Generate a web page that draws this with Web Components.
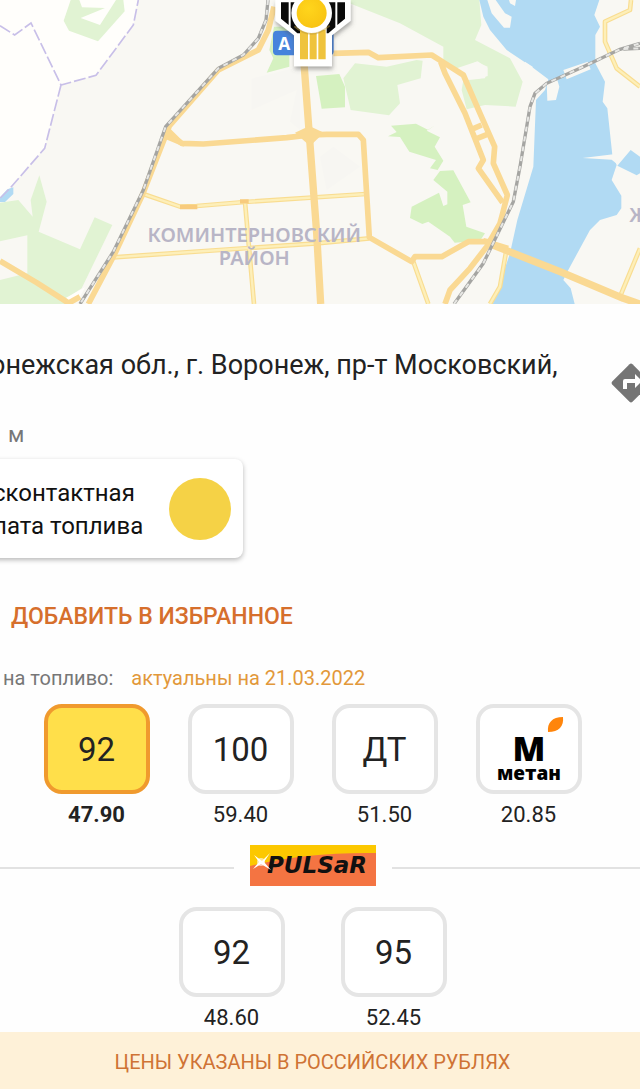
<!DOCTYPE html>
<html lang="ru">
<head>
<meta charset="utf-8">
<meta name="viewport" content="width=device-width, initial-scale=1">
<title>АЗС</title>
<style>
  body {
    margin: 0;
    overflow-x: hidden;
    background: #fefefe;
    color: #222;
    font-family: Roboto, sans-serif;
  }
</style>
</head>
<body>

<station-page>
  <city-map slot="map"></city-map>
  <station-address distance="м">онежская обл., г. Воронеж, пр-т Московский,</station-address>
  <pay-card><span>сконтактная</span><br><span>лата топлива</span></pay-card>
  <favorite-button>ДОБАВИТЬ В ИЗБРАННОЕ</favorite-button>
  <price-caption><span>на топливо:</span><span slot="date">актуальны на 21.03.2022</span></price-caption>
  <fuel-row>
    <fuel-tile price="47.90" selected>92</fuel-tile>
    <fuel-tile price="59.40">100</fuel-tile>
    <fuel-tile price="51.50">ДТ</fuel-tile>
    <fuel-tile price="20.85"><methane-logo></methane-logo></fuel-tile>
  </fuel-row>
  <brand-divider></brand-divider>
  <fuel-row wide>
    <fuel-tile price="48.60">92</fuel-tile>
    <fuel-tile price="52.45">95</fuel-tile>
  </fuel-row>
  <currency-note slot="footer">ЦЕНЫ УКАЗАНЫ В РОССИЙСКИХ РУБЛЯХ</currency-note>
</station-page>

<script>
// small helper, every component below renders a static template
function render(host, html) {
  const template = document.createElement('template');
  template.innerHTML = html;
  host.attachShadow({ mode: 'open' }).appendChild(template.content.cloneNode(true));
}

class StationPage extends HTMLElement {
  constructor() {
    super();
    render(this, `
      <style>
        :host { display: flex; flex-direction: column; min-height: 100vh; overflow: hidden; }
        /* the sheet starts a little to the left of the window */
        main { display: flex; flex-direction: column; flex: 1; margin-left: -15px; padding-top: 40px; }
        footer { margin-left: -15px; }
      </style>
      <slot name="map"></slot>
      <main><slot></slot></main>
      <footer><slot name="footer"></slot></footer>
    `);
  }
}

class CityMap extends HTMLElement {
  constructor() {
    super();
    render(this, `
      <style>
        :host { display: block; }
        svg { display: block; width: 100%; }
        .park { fill: #e1f3d3; }
        .park2 { fill: #d5f1c0; }
        .water { fill: #b1daf3; }
        .land { fill: #f9f8f3; }
        .road { fill: none; stroke: #fad993; stroke-linejoin: round; }
        .w8 { stroke-width: 12; }
        .w6 { stroke-width: 17; }
        .w9 { stroke-width: 22; }
        .street { fill: none; stroke: #f9dd91; stroke-width: 14; stroke-linejoin: round; }
        .street-in { fill: none; stroke: #fdefb9; stroke-width: 7; stroke-linejoin: round; }
        .rail { fill: none; stroke: #a5a5a2; stroke-width: 10; }
        .rail-in { fill: none; stroke: #e7e7e4; stroke-width: 6; stroke-dasharray: 15 15; }
        .border { fill: none; stroke: #c8bfe8; stroke-width: 5; stroke-dasharray: 36 9; }
        .label { font: 600 60px "Noto Sans", sans-serif; fill: #b8b5c6; }
        .badge { font: 700 52px "Noto Sans", sans-serif; fill: #fff; }
      </style>
      <svg viewBox="0 0 1920 912" role="img" aria-label="Карта">
        <defs>
          <radialGradient id="sun" cx=".4" cy=".35" r=".7">
            <stop offset="0" stop-color="#ffd51c"/><stop offset="1" stop-color="#f8c312"/>
          </radialGradient>
          <filter id="shade" x="-20%" y="-20%" width="140%" height="150%">
            <feDropShadow dx="2" dy="9" stdDeviation="6" flood-color="#555" flood-opacity=".5"/>
          </filter>
        </defs>
        <rect class="land" width="1920" height="912"/>
        <path d="M0 0H415L400 75L288 226L183 255L134 445L30 565L0 595Z" fill="#fffefb"/>
        <path d="M755 236L900 200V390L870 365L890 270L755 330ZM960 470L1000 440L1080 500L980 570Z" fill="#f7f6f2"/>

        <!-- parks -->
        <path class="park" d="M212 0H238L246 22L315 24L242 54L300 75L348 0H370L374 34L294 124L207 92L191 62Z"/>
        <path class="park" d="M0 608L55 600L98 650L92 600L118 526L140 605L116 695L240 748L284 652L337 675L245 865L200 895L215 912H0V840L82 820V706L0 724Z"/>
        <path class="park" d="M1024 0H1438L1444 75L1425 120L1530 175L1568 245L1547 320L1455 315L1400 328L1385 270L1390 240L1455 235L1463 200L1430 185L1375 210L1330 180V140L1200 70Z"/>
        <path class="park" d="M1065 190L1160 200L1250 180L1268 182L1262 235L1192 255L1200 310L1167 346L1052 330L1030 235Z"/>
        <path class="park2" d="M822 80L808 150L820 175L800 218L868 200V80ZM948 228L1018 222L1035 260V322L965 326Z"/>
        <path class="park2" d="M1173 377L1248 371L1285 390L1305 376L1280 392L1320 412L1304 440L1330 482L1313 510L1290 505L1308 480L1228 455L1200 411L1164 409L1190 396Z"/>
        <path class="park2" d="M1320 513L1360 511L1412 607L1388 615L1399 680L1455 700L1440 722L1364 728L1350 710L1285 665L1267 672L1230 654L1235 620L1317 578L1330 618L1342 613V575L1300 540Z"/>

        <!-- empty plots -->
        <path fill="#fffefb" d="M197 894L255 862L240 890L210 904Z"/>
        <path class="land" d="M1370 205L1433 184L1463 205V228L1435 237L1400 240Z"/>

        <!-- reservoir -->
        <path class="water" d="M1438 0H1798L1783 45L1800 80L1786 105V190L1815 245L1808 305L1822 325L1837 465L1850 495L1835 540L1864 587V625L1850 645L1800 660L1770 690L1702 815L1690 840L1712 865L1724 912H1478L1530 760L1552 660L1600 500L1608 300L1635 270L1645 238L1595 200L1520 150L1470 90L1450 50Z"/>
        <path class="water" d="M1852 497L1892 450L1920 470V520L1910 526ZM0 592L22 568L40 562V582L15 606H0Z"/>
        <path class="land" d="M1462 0H1487L1515 40L1535 50L1530 83L1512 83L1475 40ZM1527 0H1548L1545 18L1530 10ZM1640 245L1672 240L1678 260L1668 300L1642 302ZM1690 210L1763 185L1772 208L1700 238ZM1748 474L1840 463L1855 495L1835 479ZM1575 185L1598 200L1595 220L1575 210Z"/>

        <path class="border" d="M0 77L44 105L93 69L183 255L288 226L400 75L415 0M183 255L134 445L30 565L0 595"/>

        <!-- secondary streets -->
        <g id="streets">
          <path class="street" d="M430 582L540 620L590 618L735 606L1098 582M340 772L950 730L1108 715M735 606L762 912M1240 785L1285 912M1520 745L1500 860L1470 912M1893 0L1890 30L1815 65V125L1850 205L1920 260M1920 745L1860 890"/>
          <path class="street-in" d="M430 582L540 620L590 618L735 606L1098 582M340 772L950 730L1108 715M735 606L762 912M1240 785L1285 912M1520 745L1500 860L1470 912M1893 0L1890 30L1815 65V125L1850 205L1920 260M1920 745L1860 890"/>
        </g>

        <!-- main roads -->
        <path class="road w6" d="M822 20L805 90L775 150L655 210L508 378L425 590L345 760L265 912"/>
        <path class="road w6" d="M497 395L545 430L610 432L860 413L930 405L980 403H1075L1090 420L1108 712L1235 785L1245 770H1325L1405 725H1480"/>
        <path class="road w8" d="M500 412L550 433L500 384"/>
        <path class="road w9" d="M912 190L928 405L950 700L962 912"/>
        <path class="road w6" d="M0 783L110 848L210 912M240 890L205 910M1000 160L1105 157L1135 173L1295 165L1335 190L1390 225L1440 340L1484 440L1480 490L1522 585L1508 640L1500 670L1460 740L1410 805L1350 870L1335 912"/>
        <path class="road w6" d="M1322 185L1335 220L1395 340L1450 480L1435 505L1508 608M1415 388L1445 375M1432 415L1462 403"/>
        <path class="road w9" d="M1460 728L1680 815L1870 895L1920 912"/>
        <path class="road w8" d="M1450 720L1525 743"/>
        <path d="M885 398L928 378L972 398L930 438Z" fill="#fad993"/>
        <path d="M720 604H746M540 621H592" stroke="#f8cb7d" stroke-width="13"/>

        <!-- railways -->
        <g>
          <path class="rail" d="M804 0L798 60L775 115L730 165L655 205L497 380L430 570L340 755L240 912"/>
          <path class="rail-in" d="M804 0L798 60L775 115L730 165L655 205L497 380L430 570L340 755L240 912"/>
          <path class="rail" d="M1362 912L1450 790L1540 605L1560 500L1590 320L1605 280L1640 250L1750 200L1860 148L1920 130M1870 147L1920 145"/>
          <path class="rail-in" d="M1362 912L1450 790L1540 605L1560 500L1590 320L1605 280L1640 250L1750 200L1860 148L1920 130M1870 147L1920 145"/>
        </g>

        <text class="label" x="763" y="725" text-anchor="middle">КОМИНТЕРНОВСКИЙ</text>
        <text class="label" x="763" y="794" text-anchor="middle">РАЙОН</text>
        <text class="label" x="1888" y="666">Ж</text>

        <!-- road number under the pin -->
        <rect x="819" y="92" width="182" height="74" rx="12" fill="#4683dc"/>
        <text class="badge" x="835" y="149">А</text>

        <!-- station pin -->
        <g transform="translate(780 0)">
          <path d="M46 0V62L102 106V199H216V106L272 62V0Z" fill="#fff" filter="url(#shade)"/>
          <path d="M63 7H86V75L63 56ZM92 7H125V100H112L92 82ZM255 7H232V75L255 56ZM226 7H200V100H205L226 82Z" fill="#0a0a0a"/>
          <path d="M120 90H144V178H120ZM149 90H170V178H149ZM175 90H197V178H175Z" fill="#efc33d"/>
          <circle cx="155" cy="39" r="61" fill="#fff"/>
          <path d="M103 79Q155 125 209 77" fill="none" stroke="#bd9b3a" stroke-opacity=".5" stroke-width="5"/>
          <circle cx="155" cy="39" r="45" fill="url(#sun)"/>
        </g>
      </svg>
    `);
  }
}

class StationAddress extends HTMLElement {
  constructor() {
    super();
    render(this, `
      <style>
        :host { display: block; padding-left: 5px; }
        .line { display: flex; align-items: flex-start; justify-content: space-between; height: 74px; }
        h1 { margin: 0; padding-top: 5px; font-size: 27px; line-height: 32px; font-weight: 400; white-space: nowrap; }
        a { flex: none; margin: 19px -11px 0 0; }
        svg { display: block; }
        p { margin: 0 0 0 18px; font-size: 22px; line-height: 32px; padding-top: 1px; color: #777; }
      </style>
      <div class="line">
        <h1><slot></slot></h1>
        <a href="#route" aria-label="Маршрут">
          <svg width="40" height="40" viewBox="0 0 40 40">
            <path d="M18.500 1.200Q20 0 21.500 1.200L38.800 18.500Q40 20 38.800 21.500L21.500 38.800Q20 40 18.500 38.800L1.200 21.500Q0 20 1.200 18.500Z" fill="#757575"/>
            <path d="M12 26V18Q12 16 14 16H24V11L31 18L24 25V20H16V26Z" fill="#fff"/>
          </svg>
        </a>
      </div>
      <p></p>
    `);
    this.shadowRoot.querySelector('p').textContent = this.getAttribute('distance');
  }
}

class PayCard extends HTMLElement {
  constructor() {
    super();
    render(this, `
      <style>
        :host { display: block; margin-top: 8px; }
        .card {
          display: flex; align-items: center; justify-content: space-between;
          box-sizing: border-box; width: 258px; height: 99px; padding: 0 12px 0 8px;
          border-radius: 8px; background: #fff; box-shadow: 0 2px 5px rgba(0, 0, 0, .28);
        }
        p { margin: 0; padding-top: 3px; font-size: 24px; line-height: 33px; color: #111; white-space: nowrap; }
        i { width: 62px; height: 62px; border-radius: 50%; background: #f5d246; }
      </style>
      <div class="card"><p><slot></slot></p><i></i></div>
    `);
  }
}

class FavoriteButton extends HTMLElement {
  constructor() {
    super();
    render(this, `
      <style>
        :host { display: block; margin-top: 43px; padding-left: 26px; }
        button { padding: 0; border: 0; background: none; color: #d66f2c; font: 500 23px/32px Roboto, sans-serif; cursor: pointer; }
      </style>
      <button type="button"><slot></slot></button>
    `);
  }
}

class PriceCaption extends HTMLElement {
  constructor() {
    super();
    render(this, `
      <style>
        :host { display: flex; gap: 18px; margin-top: 33px; padding-left: 18px; font-size: 20px; line-height: 24px; color: #777; }
        .date { color: #e2983a; }
      </style>
      <slot></slot>
      <span class="date"><slot name="date"></slot></span>
    `);
  }
}

class FuelRow extends HTMLElement {
  constructor() {
    super();
    render(this, `
      <style>
        :host { display: flex; justify-content: center; gap: 38px; padding-top: 14px; }
        :host([wide]) { gap: 56px; padding-top: 21px; }
      </style>
      <slot></slot>
    `);
  }
}

class FuelTile extends HTMLElement {
  constructor() {
    super();
    render(this, `
      <style>
        :host { display: block; width: 106px; text-align: center; }
        button {
          display: flex; align-items: center; justify-content: center;
          box-sizing: border-box; width: 100%; height: 90px; padding: 2px 0 0;
          border: 4px solid #e5e5e5; border-radius: 18px; background: #fff;
          color: #222; font: 400 33px/40px Roboto, sans-serif; cursor: pointer;
        }
        :host([selected]) button { border-color: #f09a2e; background: #ffdf4a; }
        .price { display: block; padding-top: 6px; font-size: 22px; line-height: 29px; }
        :host([selected]) .price { font-weight: 700; }
      </style>
      <button type="button" aria-describedby="price"><slot></slot></button>
      <span class="price" id="price"></span>
    `);
    this.shadowRoot.querySelector('.price').textContent = this.getAttribute('price');
    this.shadowRoot.querySelector('button').setAttribute('aria-pressed', this.hasAttribute('selected'));
  }
}

class MethaneLogo extends HTMLElement {
  constructor() {
    super();
    render(this, `
      <style>
        :host { display: block; }
        svg { display: block; }
        text { font-family: "Open Sans", sans-serif; font-weight: 800; fill: #000; }
      </style>
      <svg width="98" height="80" viewBox="0 0 98 80">
        <text x="49" y="51" font-size="34" text-anchor="middle">М</text>
        <text x="49" y="70" font-size="19" text-anchor="middle">метан</text>
        <path d="M68 22C67 13 72 7 83 7C84 16 79 22 68 22Z" fill="#ff850b"/>
      </svg>
    `);
  }
}

class BrandDivider extends HTMLElement {
  constructor() {
    super();
    render(this, `
      <style>
        :host { display: flex; align-items: center; gap: 16px; padding-top: 16px; }
        hr { flex: 1; margin: 4px 0 0; border: 0; border-top: 2px solid #e2e2e2; }
        svg { display: block; flex: none; }
        text { font: italic 700 23px "DejaVu Sans", sans-serif; fill: #111; }
      </style>
      <hr>
      <svg width="126" height="41" viewBox="0 0 126 41" role="img" aria-label="PULSAR">
        <rect width="126" height="41" fill="#f47442"/>
        <path d="M0 0H126V8Q55 7 0 21Z" fill="#fcc800"/>
        <text x="67" y="28" text-anchor="middle">PULSaR</text>
        <path d="M4 10L12 16L20 8L14 17L21 25L11 19L3 24L9 17Z" fill="#fff"/>
        <circle cx="11" cy="17" r="4" fill="#fff" fill-opacity=".6"/>
      </svg>
      <hr>
    `);
  }
}

class CurrencyNote extends HTMLElement {
  constructor() {
    super();
    render(this, `
      <style>
        :host { display: block; padding: 16px 0 13px; background: #fef1d8; color: #cf7335; font-size: 20px; line-height: 28px; text-align: center; }
      </style>
      <slot></slot>
    `);
  }
}

customElements.define('station-page', StationPage);
customElements.define('city-map', CityMap);
customElements.define('station-address', StationAddress);
customElements.define('pay-card', PayCard);
customElements.define('favorite-button', FavoriteButton);
customElements.define('price-caption', PriceCaption);
customElements.define('fuel-row', FuelRow);
customElements.define('fuel-tile', FuelTile);
customElements.define('methane-logo', MethaneLogo);
customElements.define('brand-divider', BrandDivider);
customElements.define('currency-note', CurrencyNote);
</script>
</body>
</html>
